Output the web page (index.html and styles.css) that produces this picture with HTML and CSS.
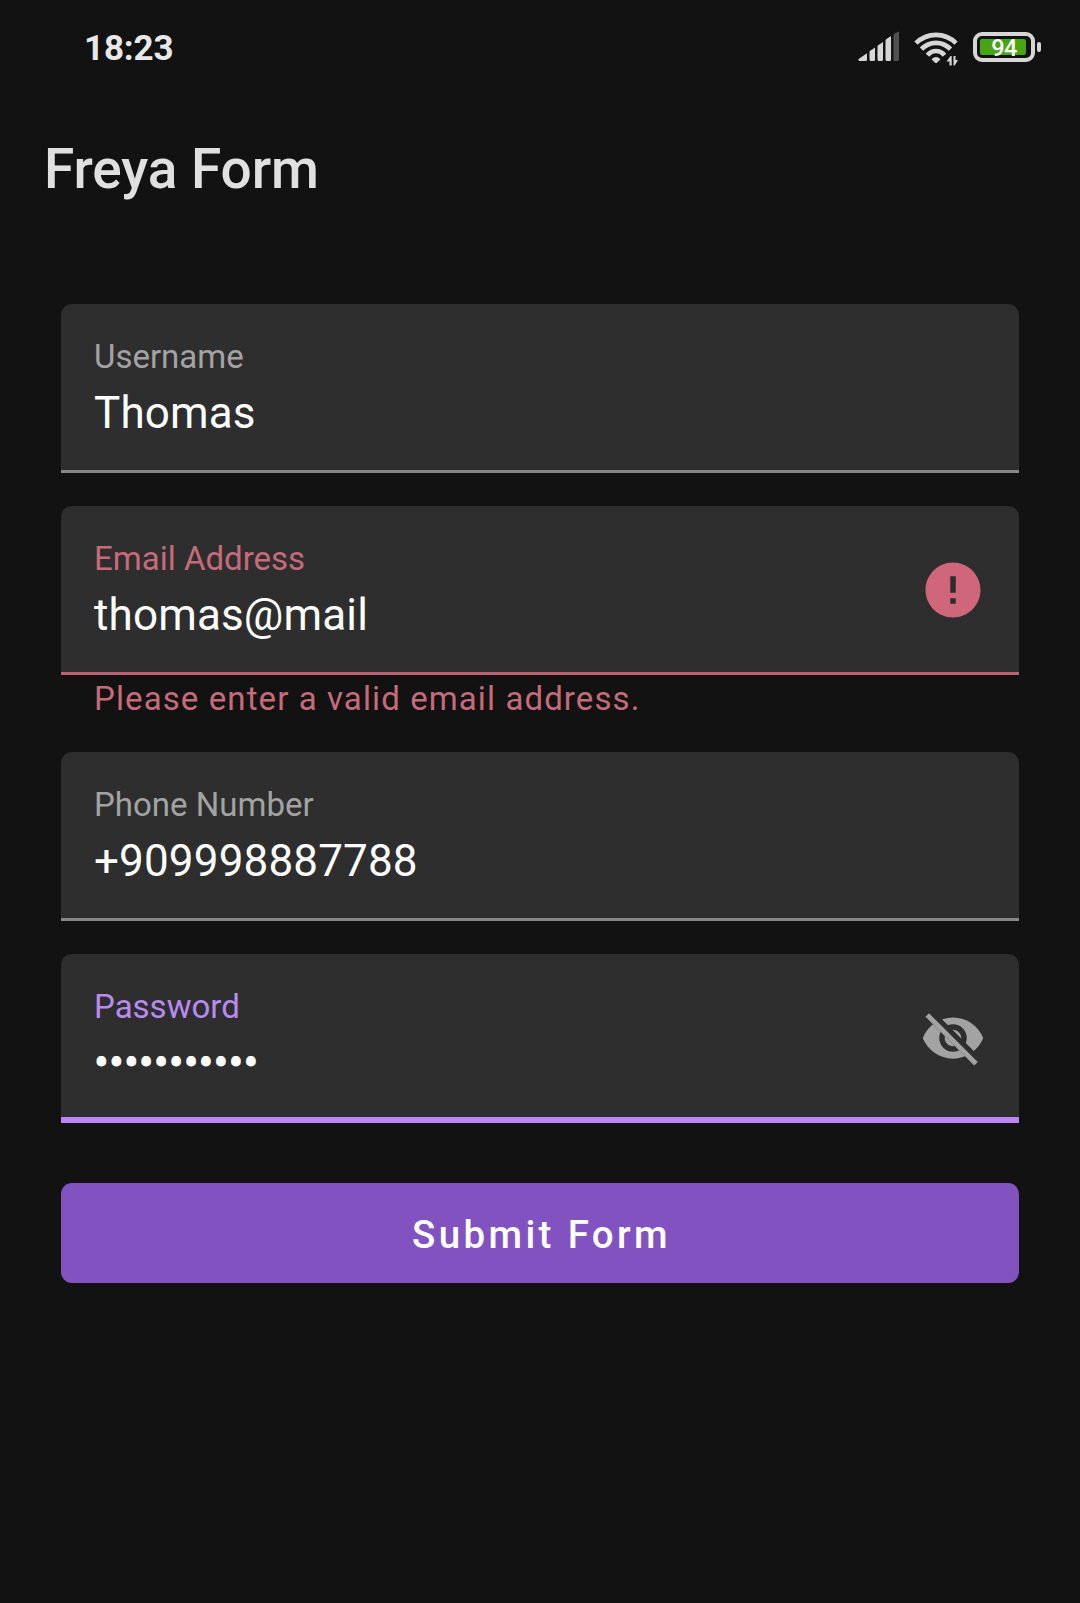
FILE: index.html
```html
<!DOCTYPE html>
<html lang="en">
<head>
<meta charset="utf-8">
<title>Freya Form</title>
<link rel="stylesheet" href="styles.css">
</head>
<body>
<header class="status-bar">
  <span class="clock">18:23</span>
  <div class="status-icons">
    <svg class="signal" width="42" height="32" viewBox="0 0 42 32">
      <g fill="#d6d6d6">
        <path d="M-.5 28 8 22.300V28.500Q8 30 6.500 30H.5Q-1 30-.5 28Z"/>
        <path d="M10.500 20.300 16 16.500V28.500Q16 30 14.500 30H12Q10.500 30 10.500 28.500Z"/>
        <path d="M18.500 15.300Q18.500 14.500 19.500 14L24 11V28.500Q24 30 22.500 30H20Q18.500 30 18.500 28.500Z"/>
        <path d="M26.500 9.500Q26.500 8.500 27.500 8L32 5V28.500Q32 30 30.500 30H28Q26.500 30 26.500 28.500Z"/>
      </g>
      <path fill="#505050" d="M34.500 4Q34.500 3 35.500 2.500L40 .5V28.500Q40 30 38.500 30H36Q34.500 30 34.500 28.500Z"/>
    </svg>
    <svg class="wifi" width="44" height="36" viewBox="0 0 44 36">
      <g fill="none" stroke="#d6d6d6" stroke-width="4.700">
        <path d="M2 12.100Q10.500 3.800 22 3.800T42 12.100"/>
        <path d="M7.500 18.200Q13.500 11.800 22 11.800T36.500 18.200"/>
        <path d="M13.500 24.200Q17 20 22 20T30.500 24.200"/>
      </g>
      <path fill="#d6d6d6" d="M17.500 28.200Q22 24 26.500 28.200L23.200 31.600Q22 32.600 20.800 31.600Z"/>
      <path fill="#d6d6d6" d="M37.700 25V34.500H35.500V30.500H32.500L36.500 25ZM39.500 25H41.500V29H44L40.700 34.500H39.500Z"/>
    </svg>
    <svg class="battery" width="70" height="32" viewBox="0 0 70 32">
      <rect x="2" y="3" width="58" height="26" rx="7" fill="none" stroke="#d6d6d6" stroke-width="4"/>
      <rect x="7" y="8" width="46" height="16" rx="2" fill="#48a512"/>
      <rect x="64" y="11" width="4" height="10" rx="2" fill="#d6d6d6"/>
      <text x="31" y="24.800" class="battery-level">94</text>
    </svg>
  </div>
</header>
<h1 class="title">Freya Form</h1>
<main class="form">
  <div class="field">
    <div class="label">Username</div>
    <div class="value">Thomas</div>
  </div>
  <div class="field field-error">
    <div class="label">Email Address</div>
    <div class="value">thomas@mail</div>
    <svg class="field-icon" viewBox="0 0 24 24"><path d="M12 2C6.480 2 2 6.480 2 12s4.480 10 10 10 10-4.480 10-10S17.520 2 12 2zm1 15h-2v-2h2v2zm0-4h-2V7h2v6z"/></svg>
  </div>
  <p class="helper">Please enter a valid email address.</p>
  <div class="field">
    <div class="label">Phone Number</div>
    <div class="value">+909998887788</div>
  </div>
  <div class="field field-focus">
    <div class="label">Password</div>
    <div class="value masked">•••••••••••</div>
    <svg class="field-icon" viewBox="0 0 24 24">
      <clipPath id="strike-gap"><path d="M4.540 1.730V1H23V23H22.270V19.460ZM2 4.270 19.730 22V23H1V4.270Z"/></clipPath>
      <path clip-path="url(#strike-gap)" d="M12 4.500C7 4.500 2.730 7.610 1 12c1.730 4.390 6 7.500 11 7.500s9.270-3.110 11-7.500c-1.730-4.390-6-7.500-11-7.500zM12 17c-2.760 0-5-2.240-5-5s2.240-5 5-5 5 2.240 5 5-2.240 5-5 5zM12 9c-1.660 0-3 1.340-3 3s1.340 3 3 3 3-1.340 3-3-1.340-3-3-3z"/>
      <path d="M3.270 4.270 19.740 20.740" stroke="#a3a3a3" stroke-width="1.800" stroke-linecap="square"/>
    </svg>
  </div>
  <button class="submit" type="button">Submit Form</button>
</main>
</body>
</html>
```
FILE: styles.css
```css
* { box-sizing: border-box; }

body {
  margin: 0;
  min-height: 1603px;
  background: #121212;
  color: #fff;
  font-family: Roboto, sans-serif;
}

.status-bar {
  display: flex;
  justify-content: space-between;
  height: 88px;
  padding: 27px 37px 0 84px;
}

.clock {
  padding-top: 1px;
  font-size: 35px;
  font-weight: 700;
  line-height: 41px;
  letter-spacing: -0.15px;
  color: #e8e8e8;
}

.status-icons {
  display: flex;
  align-items: flex-start;
  padding-top: 4px;
}

.signal { overflow: visible; }
.wifi { margin-left: 13px; }
.battery { margin-left: 15px; }

.battery-level {
  font-size: 23.5px;
  font-weight: 500;
  letter-spacing: -0.5px;
  fill: #fff;
  text-anchor: middle;
}

.title {
  margin: 0;
  padding: 48px 44px 0;
  height: 216px;
  font-size: 55px;
  font-weight: 500;
  line-height: 67px;
  letter-spacing: -0.1px;
  color: #e0e0e0;
}

.form {
  display: flex;
  flex-direction: column;
  padding: 0 61px;
}

.field {
  position: relative;
  height: 169px;
  margin-bottom: 33px;
  padding: 33px 33px 0;
  border-radius: 11px 11px 0 0;
  background: #2e2e2e;
  box-shadow: inset 0 -3px #868686;
}

.label {
  font-size: 33px;
  line-height: 40px;
  color: #a3a3a3;
}

.value {
  margin-top: 10px;
  font-size: 44px;
  line-height: 52px;
  letter-spacing: 0.15px;
}

.masked {
  letter-spacing: 0.1px;
  -webkit-text-stroke: 0.8px #fff;
}

.field-icon {
  position: absolute;
  top: 51px;
  right: 33px;
  width: 66px;
  height: 66px;
  fill: #a3a3a3;
}

.field-error {
  margin-bottom: 0;
  box-shadow: inset 0 -3px #b86273;
}

.field-error .label { color: #c66b7b; }
.field-error .field-icon { fill: #cf6679; }

.helper {
  margin: 0;
  height: 77px;
  padding: 4px 33px 0;
  font-size: 33px;
  line-height: 39px;
  letter-spacing: 1.1px;
  color: #c66b7b;
}

.field-focus { box-shadow: inset 0 -6px #bb86fc; }
.field-focus .label { color: #b98af0; }

.submit {
  height: 100px;
  margin-top: 27px;
  padding: 2px 0 0 3px;
  border: 0;
  border-radius: 11px;
  background: #8352c1;
  color: #fff;
  font: 500 38.5px/45px Roboto, sans-serif;
  letter-spacing: 3.35px;
}
```
